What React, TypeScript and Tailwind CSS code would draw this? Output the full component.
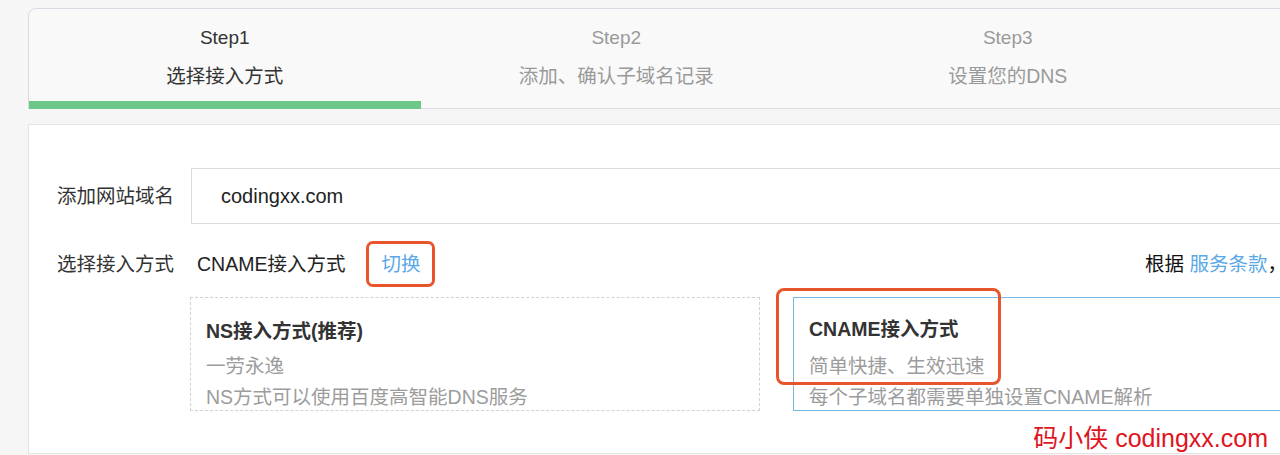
import React from "react";

type Step = {
  title: string;
  desc: string;
  active?: boolean;
};

const steps: Step[] = [
  { title: "Step1", desc: "选择接入方式", active: true },
  { title: "Step2", desc: "添加、确认子域名记录" },
  { title: "Step3", desc: "设置您的DNS" },
];

const font = "font-['Liberation_Sans','Noto_Sans_CJK_SC',sans-serif]";

const App = () => {
  return (
    <div className={`relative h-[455px] w-[1280px] overflow-hidden bg-[#f6f6f6] ${font}`}>
      {/* Steps */}
      <div className="ml-[28px] mt-[8px] w-[1600px] rounded-tl-[8px] border border-[#d6dce2] bg-[#f9f9f9]">
        <div className="flex">
          {steps.map((s) => (
            <div key={s.title} className="flex w-[391.5px] shrink-0 flex-col items-center">
              <div
                className={`pt-[15px] text-[19px] leading-[28px] ${
                  s.active ? "text-[#333]" : "text-[#999]"
                }`}
              >
                {s.title}
              </div>
              <div
                className={`mt-[10px] text-[19.5px] leading-[28px] ${
                  s.active ? "text-[#333]" : "text-[#999]"
                }`}
              >
                {s.desc}
              </div>
              <div
                className={`-mb-px mt-[11px] h-[8px] w-full ${
                  s.active ? "bg-[#6cc788]" : "bg-transparent"
                }`}
              />
            </div>
          ))}
        </div>
      </div>

      {/* Form panel */}
      <div className="ml-[28px] mt-[15px] h-[330px] w-[1600px] border border-[#e5e5e5] bg-white pl-[28px] pt-[43px]">
        {/* domain row */}
        <div className="flex items-center">
          <div className="w-[134px] text-[19.5px] leading-[28px] text-[#333]">添加网站域名</div>
          <div className="flex h-[56px] w-[1200px] items-center border border-[#dcdcdc] bg-white pl-[29px] text-[20px] text-[#222]">
            codingxx.com
          </div>
        </div>

        {/* access row */}
        <div className="mt-[17px] flex w-[1230px] items-center">
          <div className="w-[134px] text-[19.5px] leading-[28px] text-[#333]">选择接入方式</div>
          <div className="pl-[6px] text-[19.5px] leading-[28px] text-[#222]">CNAME接入方式</div>
          <div className="ml-[21px] rounded-[7px] border-[3px] border-[#e8552d] px-[12px] py-[6px] text-[19.5px] leading-[28px] text-[#5aa8e6]">
            切换
          </div>
          <div className="ml-auto whitespace-nowrap text-[19.5px] leading-[28px] text-[#111]">
            根据 <span className="text-[#5aa8e6]">服务条款</span>，
          </div>
        </div>

        {/* option cards */}
        <div className="ml-[133px] mt-[10px] flex gap-[33px]">
          <div className="h-[114px] w-[570px] shrink-0 border border-dashed border-[#d2d2d2] pl-[15px] pt-[19px]">
            <div className="text-[19.5px] font-bold leading-[28px] text-[#333]">NS接入方式(推荐)</div>
            <div className="mt-[6px] text-[19.5px] leading-[31px] text-[#9c9c9c]">一劳永逸</div>
            <div className="text-[19.5px] leading-[31px] text-[#9c9c9c]">NS方式可以使用百度高智能DNS服务</div>
          </div>
          <div className="relative h-[114px] w-[570px] shrink-0 border border-[#7ab8e8] pl-[15px] pt-[17px]">
            <div className="text-[19.5px] font-bold leading-[28px] text-[#333]">CNAME接入方式</div>
            <div className="mt-[8px] text-[19.5px] leading-[31px] text-[#9c9c9c]">简单快捷、生效迅速</div>
            <div className="text-[19.5px] leading-[31px] text-[#9c9c9c]">每个子域名都需要单独设置CNAME解析</div>
            {/* annotation box */}
            <div className="absolute left-[-18px] top-[-10px] h-[97px] w-[225px] rounded-[8px] border-[3px] border-[#e8552d]" />
          </div>
        </div>
      </div>

      {/* watermark */}
      <div className="absolute right-[12px] top-[422px] text-[25px] leading-[32px] text-[#e0141e]">
        码小侠 codingxx.com
      </div>
    </div>
  );
};

export default App;
